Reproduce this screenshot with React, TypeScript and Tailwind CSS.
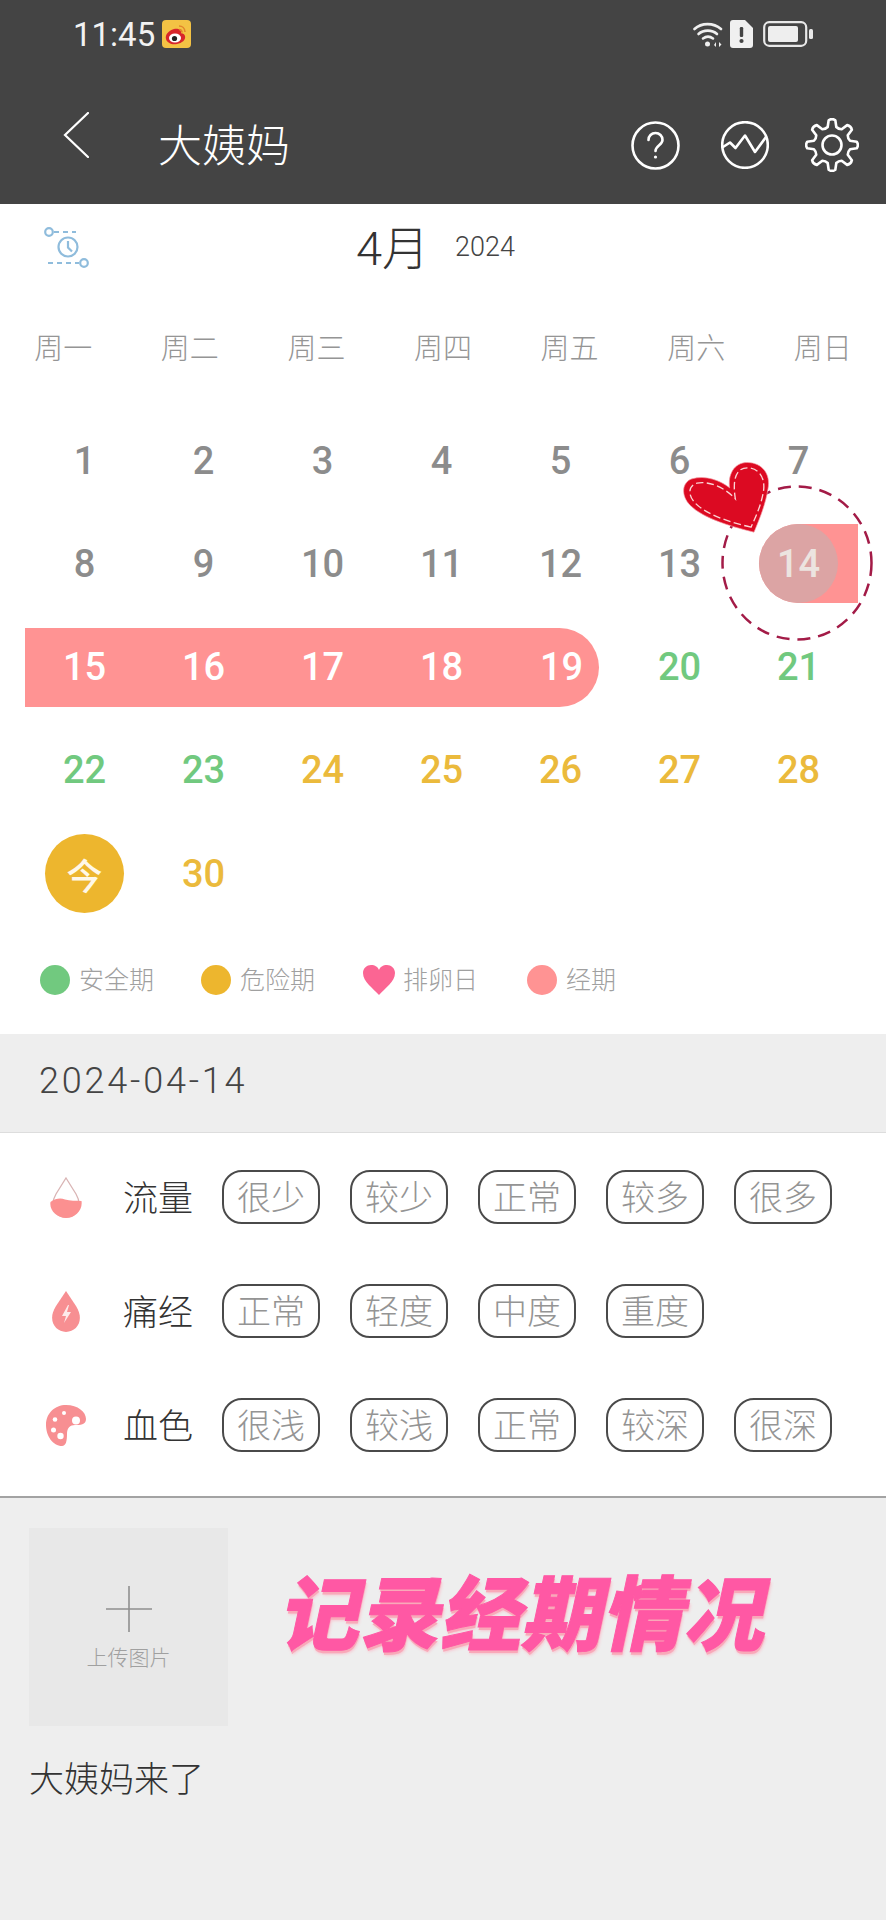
import React from "react";

const weekdays = ["周一", "周二", "周三", "周四", "周五", "周六", "周日"];
const GREY = "text-[#8c8c8c]";
const GREEN = "text-[#71c97f]";
const YELLOW = "text-[#ebba3c]";

type Cell = { n?: number; c?: string; kind?: "bar" | "barEnd" | "start" | "today" | "empty" };

const cells: Cell[] = [
  ...[1, 2, 3, 4, 5, 6, 7, 8, 9, 10, 11, 12, 13].map((n) => ({ n, c: GREY })),
  { n: 14, kind: "start" },
  { n: 15, kind: "bar" },
  { n: 16, kind: "bar" },
  { n: 17, kind: "bar" },
  { n: 18, kind: "bar" },
  { n: 19, kind: "barEnd" },
  { n: 20, c: GREEN },
  { n: 21, c: GREEN },
  { n: 22, c: GREEN },
  { n: 23, c: GREEN },
  ...[24, 25, 26, 27, 28].map((n) => ({ n, c: YELLOW })),
  { kind: "today" },
  { n: 30, c: YELLOW },
];

function DayCell({ cell }: { cell: Cell }) {
  const num = "font-['Roboto',sans-serif] font-medium text-[38px] leading-none";
  if (cell.kind === "today") {
    return (
      <div className="flex items-center justify-center">
        <div className="flex h-[79px] w-[79px] items-center justify-center rounded-full bg-[#edb62e] text-[36px] font-medium text-[#fff8e8]">
          今
        </div>
      </div>
    );
  }
  if (cell.kind === "bar") {
    return (
      <div className="flex items-center">
        <div className={`flex h-[79px] w-full items-center justify-center bg-[#ff9393] text-white ${num}`}>{cell.n}</div>
      </div>
    );
  }
  if (cell.kind === "barEnd") {
    return (
      <div className="flex items-center">
        <div className={`flex h-[79px] w-[98px] items-center justify-start rounded-r-full bg-[#ff9393] pl-[39px] text-white ${num}`}>
          {cell.n}
        </div>
      </div>
    );
  }
  if (cell.kind === "start") {
    return (
      <div className="flex items-center justify-end">
        <div className="flex h-[79px] w-[99px] items-center rounded-l-full bg-[#ff9393]">
          <div className={`flex h-[79px] w-[79px] items-center justify-center rounded-full bg-[#dca4a4] text-[#ece4e0] ${num}`}>
            {cell.n}
          </div>
        </div>
      </div>
    );
  }
  return <div className={`flex items-center justify-center ${cell.c} ${num}`}>{cell.n}</div>;
}

function gearPath(cx: number, cy: number, teeth: number, ro: number, ri: number) {
  const pts: string[] = [];
  const step = (Math.PI * 2) / teeth;
  for (let i = 0; i < teeth; i++) {
    const a = i * step - Math.PI / 2;
    const p = (r: number, t: number) => `${(cx + r * Math.cos(a + t)).toFixed(2)} ${(cy + r * Math.sin(a + t)).toFixed(2)}`;
    pts.push(`${i === 0 ? "M" : "L"}${p(ri, -step * 0.3)}`);
    pts.push(`L${p(ro, -step * 0.17)}`);
    pts.push(`Q${p(ro + 2, 0)} ${p(ro, step * 0.17)}`);
    pts.push(`L${p(ri, step * 0.3)}`);
    pts.push(`Q${p(ri - 1.5, step * 0.5)} ${p(ri, step * 0.7)}`);
  }
  return pts.join(" ") + "Z";
}

function Weibo() {
  return (
    <svg width="29" height="28" viewBox="0 0 29 28">
      <rect width="29" height="28" rx="4" fill="#f3c244" />
      <path d="M12 9C6 11 3 15 4 19c1 4 6 6 11 5s9-4 8-8c-.5-2-3-3-4-2.500C20 10 16 8 12 9Z" fill="#d8252a" />
      <ellipse cx="13" cy="18" rx="6" ry="4.500" fill="#fff" />
      <circle cx="12.500" cy="18.500" r="2.600" fill="#222" />
      <path d="M17 6c3 0 6 2 6 6M17 9.500c1.500 0 3 1 3 3" stroke="#e2842c" strokeWidth="1.600" fill="none" />
    </svg>
  );
}

function Wifi() {
  return (
    <svg width="30" height="27" viewBox="0 0 30 27" fill="none" stroke="#efefef" strokeWidth="2.600" strokeLinecap="round">
      <path d="M1.500 8C8.500 1.500 20.500 1.500 28 8" />
      <path d="M5.500 13C10.500 8.500 19 8.500 24 13" />
      <path d="M10 17.500c3-2.200 7-2.200 10 0" />
      <circle cx="14.500" cy="23" r="2.500" fill="#efefef" stroke="none" />
      <path d="M21 24l2-3v5zM26 21v5l2.500-2.500z" fill="#efefef" stroke="none" />
    </svg>
  );
}

function Sim() {
  return (
    <svg width="23" height="28" viewBox="0 0 23 28">
      <path d="M3 0h12l8 8v17a3 3 0 0 1-3 3H3a3 3 0 0 1-3-3V3a3 3 0 0 1 3-3Z" fill="#f0f0f0" />
      <rect x="9.800" y="7" width="3.400" height="10" rx="1.200" fill="#444" />
      <circle cx="11.500" cy="21" r="2.100" fill="#444" />
    </svg>
  );
}

function Battery() {
  return (
    <svg width="50" height="26" viewBox="0 0 50 26">
      <rect x="1.200" y="1.200" width="42" height="23.600" rx="5" fill="none" stroke="#e8e8e8" strokeWidth="2.200" />
      <rect x="5" y="5" width="30" height="16" rx="2" fill="#eeeeee" />
      <rect x="46" y="8" width="4" height="10" rx="1.500" fill="#e8e8e8" />
    </svg>
  );
}

function HeaderIcons() {
  return (
    <div className="flex items-center">
      <svg width="49" height="49" viewBox="0 0 49 49" fill="none" stroke="#fff" strokeWidth="2.600" strokeLinecap="round">
        <circle cx="24.500" cy="24.500" r="23" />
        <path d="M17.500 19c0-4 3-7 7-7s7 3 7 7c0 5-7 5.500-7 11" />
        <circle cx="24.500" cy="36" r="1.600" fill="#fff" stroke="none" />
      </svg>
      <svg className="ml-[41px]" width="48" height="48" viewBox="0 0 48 48" fill="none" stroke="#fff" strokeWidth="2.600" strokeLinejoin="round" strokeLinecap="round">
        <circle cx="24" cy="24" r="22.800" />
        <path d="M2 26l7-4.500 5.500 5.500 9.500-12.500L34 31l11-15" />
      </svg>
      <svg className="ml-[36px]" width="54" height="54" viewBox="0 0 54 54" fill="none" stroke="#fff" strokeWidth="2.600" strokeLinejoin="round">
        <path d={gearPath(27, 27, 8, 25, 18.500)} />
        <circle cx="27" cy="27" r="9.500" />
      </svg>
    </div>
  );
}

function ClockIcon() {
  return (
    <svg width="46" height="42" viewBox="0 0 46 42" fill="none" stroke="#8fbcdc" strokeWidth="2.200">
      <circle cx="5" cy="5" r="3.800" />
      <path d="M10 5h22" strokeDasharray="5 4" />
      <circle cx="24" cy="20" r="9.500" />
      <path d="M24 14v6.500l4 4" />
      <path d="M4 36h31" strokeDasharray="5 4" />
      <circle cx="40" cy="36" r="3.800" />
    </svg>
  );
}

function Drop1() {
  return (
    <svg width="32" height="41" viewBox="0 0 32 41">
      <path d="M16 1 26 17C33 29 27 40 16 40S-1 29 6 17Z" fill="none" stroke="#d9b4b4" strokeWidth="1.300" />
      <path d="M.500 25C6 21 11 21 15 22.500c5 1.500 11 1 16.500 1.500C33 33 25 41 16 41S-1 33 .500 25Z" fill="#fb9090" />
    </svg>
  );
}

function Drop2() {
  return (
    <svg width="32" height="41" viewBox="0 0 32 41">
      <path d="M16 0 26 15C35 29 27 41 16 41S-3 29 6 15Z" fill="#f78f92" />
      <path d="M18 14l-6 11h4l-2 7 7-11h-4l2-7Z" fill="#fdeaea" />
    </svg>
  );
}

function Palette() {
  return (
    <svg width="40" height="41" viewBox="0 0 40 41">
      <path d="M20 0C32 0 40 7 40 14c0 6-6 6-11 6-5 0-8 3-8 9 0 7-1 12-5 12C7 41 0 31 0 20 0 8 9 0 20 0Z" fill="#f78f92" />
      <circle cx="30" cy="15.500" r="4" fill="#fff" />
      <circle cx="9" cy="14.500" r="2.300" fill="#fff" />
      <circle cx="7.500" cy="25" r="2.500" fill="#fff" />
      <circle cx="14.500" cy="31" r="3.200" fill="#fff" />
      <circle cx="18" cy="8" r="2" fill="#fff" />
    </svg>
  );
}

function Chip({ t }: { t: string }) {
  return (
    <div className="flex h-[54px] w-[98px] items-center justify-center rounded-[20px] border-2 border-[#4a4a4a] pb-[3px] text-[34px] font-light leading-none text-[#949494]">
      {t}
    </div>
  );
}

function RecordRow({ icon, label, chips }: { icon: React.ReactNode; label: string; chips: string[] }) {
  return (
    <div className="flex h-[114px] items-center">
      <div className="flex w-[123px] justify-center pl-[9px]">{icon}</div>
      <div className="w-[99px] pb-[3px] text-[35px] font-light leading-none text-[#333]">{label}</div>
      <div className="flex gap-[30px]">
        {chips.map((c) => (
          <Chip key={c} t={c} />
        ))}
      </div>
    </div>
  );
}

function Legend() {
  const text = "text-[25px] font-light leading-none text-[#a0a0a0] pb-[2px]";
  return (
    <div className="flex h-[109px] items-center pl-[40px]">
      <span className="h-[30px] w-[30px] rounded-full bg-[#71c97f]" />
      <span className={`ml-[9px] w-[122px] ${text}`}>安全期</span>
      <span className="h-[30px] w-[30px] rounded-full bg-[#edb62e]" />
      <span className={`ml-[9px] w-[123px] ${text}`}>危险期</span>
      <svg width="32" height="30" viewBox="0 0 32 30">
        <path d="M16 30C10 23 0 17 0 8c0-5 4-8 8-8 4 0 7 2 8 5 1-3 4-5 8-5 4 0 8 3 8 8 0 9-10 15-16 22Z" fill="#fb6593" />
      </svg>
      <span className={`ml-[8px] w-[124px] ${text}`}>排卵日</span>
      <span className="h-[30px] w-[30px] rounded-full bg-[#ff9393]" />
      <span className={`ml-[9px] ${text}`}>经期</span>
    </div>
  );
}

function BigHeart() {
  return (
    <svg width="86" height="71" viewBox="128 95 258 212">
      <path d="M341 305C280 290 190 265 150 225 120 195 125 155 155 145 195 133 240 150 268 172 262 135 280 95 322 96 365 97 392 130 383 175 376 220 358 265 341 305Z" fill="#dc0a22" stroke="#f5a0a8" strokeWidth="2" />
      <path d="M332 290C280 278 200 255 165 218 140 192 145 165 170 158 205 150 255 172 285 205 278 160 280 112 322 112 355 113 374 140 370 178 364 220 348 255 332 290Z" fill="none" stroke="#fbd5d5" strokeWidth="4" strokeDasharray="22 10" />
    </svg>
  );
}

function Marker() {
  return (
    <svg width="152" height="156" viewBox="0 0 152 156" fill="none">
      <ellipse cx="76" cy="78" rx="74.500" ry="76.500" stroke="#a31b47" strokeWidth="2.500" strokeDasharray="13 8" />
    </svg>
  );
}

export default function App() {
  return (
    <div className="relative h-[1920px] w-[886px] overflow-hidden bg-white font-['Noto_Sans_CJK_SC',sans-serif]">
      <header className="h-[204px] bg-[#444444]">
        <div className="flex h-[68px] items-center pl-[73px] pr-[73px]">
          <span className="font-['Roboto',sans-serif] text-[33px] font-normal leading-none text-[#f2f2f2]">11:45</span>
          <span className="ml-[7px]">
            <Weibo />
          </span>
          <span className="ml-auto">
            <Wifi />
          </span>
          <span className="ml-[7px]">
            <Sim />
          </span>
          <span className="ml-[10px]">
            <Battery />
          </span>
        </div>
        <div className="flex h-[136px] items-center pl-[63px] pr-[27px]">
          <svg width="26" height="46" viewBox="0 0 26 46" className="mb-[2px]" fill="none" stroke="#fff" strokeWidth="2.200" strokeLinecap="round">
            <path d="M25 1 2 23l23 22" />
          </svg>
          <span className="ml-[69px] mt-[14px] text-[44px] font-light leading-none text-white">大姨妈</span>
          <span className="ml-auto mt-[18px]">
            <HeaderIcons />
          </span>
        </div>
      </header>

      <div className="flex h-[84px] items-center pl-[44px]">
        <span className="mt-[4px]">
          <ClockIcon />
        </span>
        <span className="ml-[266px] text-[47px] font-light leading-none text-[#333]">
          <span className="font-['Roboto',sans-serif] font-light">4</span>月
        </span>
        <span className="ml-[26px] mt-[3px] font-['Roboto',sans-serif] text-[27px] font-light leading-none text-[#444]">2024</span>
      </div>

      <div className="grid h-[121px] grid-cols-7 items-center pb-[4px]">
        {weekdays.map((d) => (
          <div key={d} className="text-center text-[29px] font-light leading-none text-[#959595]">
            {d}
          </div>
        ))}
      </div>

      <div className="grid grid-cols-[repeat(7,119px)] grid-rows-[repeat(5,103.25px)] pl-[25px]">
        {cells.map((c, i) => (
          <DayCell key={i} cell={c} />
        ))}
      </div>

      <Legend />

      <div className="flex h-[99px] items-center border-b border-[#dddddd] bg-[#eeeeee] pb-[4px] pl-[39px]">
        <span className="font-['Roboto',sans-serif] text-[36px] font-light leading-none tracking-[2.8px] text-[#444]">2024-04-14</span>
      </div>

      <section className="border-b-2 border-[#a3a3a3] pb-[14px] pt-[7px]">
        <RecordRow icon={<Drop1 />} label="流量" chips={["很少", "较少", "正常", "较多", "很多"]} />
        <RecordRow icon={<Drop2 />} label="痛经" chips={["正常", "轻度", "中度", "重度"]} />
        <RecordRow icon={<Palette />} label="血色" chips={["很浅", "较浅", "正常", "较深", "很深"]} />
      </section>

      <section className="h-[424px] bg-[#eeeeee] pl-[29px] pt-[30px]">
        <div className="flex h-[198px] w-[199px] flex-col items-center bg-[#e8e8e8] pt-[58px]">
          <svg width="46" height="46" viewBox="0 0 46 46" stroke="#8f8f8f" strokeWidth="1.600">
            <path d="M23 0v46M0 23h46" />
          </svg>
          <span className="mt-[14px] text-[21px] font-light leading-none text-[#a0a0a0]">上传图片</span>
        </div>
        <div className="mt-[27px] text-[35px] font-light leading-[48px] text-[#333]">大姨妈来了</div>
      </section>

      <div className="absolute left-[721px] top-[485px]">
        <Marker />
      </div>
      <div className="absolute left-[683px] top-[462px]">
        <BigHeart />
      </div>
      <div className="absolute left-[285px] top-[1561px] -skew-x-12 whitespace-nowrap text-[81px] font-black leading-[96px] text-[#ff58a4] [-webkit-text-stroke:1px_#ff58a4] [text-shadow:1px_3px_0_#f9a9b9,2px_4px_3px_#f7c5d0]">
        记录经期情况
      </div>
    </div>
  );
}
